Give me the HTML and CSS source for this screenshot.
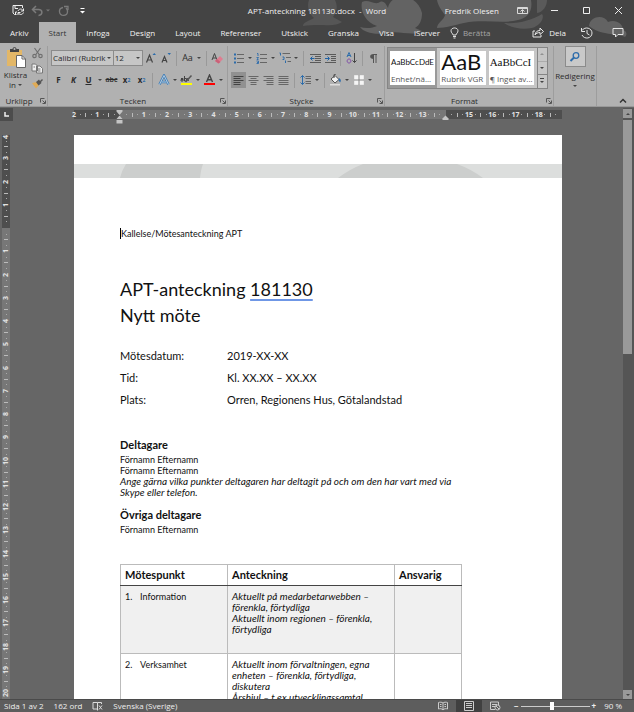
FILE: index.html
```html
<!DOCTYPE html>
<html lang="sv">
<head>
<meta charset="utf-8">
<meta name="viewport" content="width=device-width, initial-scale=1">
<title>APT-anteckning 181130.docx - Word</title>
<link rel="stylesheet" href="styles.css">
</head>
<body>
<div class="app">
<header class="header">
  <svg class="header-art" viewBox="0 0 370 43" preserveAspectRatio="xMaxYMin slice" aria-hidden="true">
    <g fill="#636363">
      <path d="M45 0H71C74 6 73 12 69 17L78 22C70 28 58 23 39 26C39 22 45 21 50 18C44 13 43 5 45 0Z" fill="#565656"/>
      <path d="M98 2C104-1 108 4 114 3C118 0 121 1 124 8C126-7 153-8 158 13C158 20 156 25 151 28L158 31C148 37 137 30 122 33C112 35 100 33 96 27C102 29 109 28 113 26C101 22 96 10 98 2Z"/>
      <path d="M173 0H267C269 11 264 18 254 20C240 24 220 19 200 23C190 25 182 28 173 28C173 23 180 20 181 15C178 11 174 6 173 0Z"/>
      <path d="M240 23C255 24 268 20 278 14C281 18 276 26 268 28C258 30 247 28 240 23Z" fill="#5a5a5a"/>
      <path d="M273 0H283C283 6 279 12 273 13Z" fill="#5a5a5a"/>
      <path d="M325 26C326 16 340 14 344 22C351 19 359 23 359 30C362 31 364 34 361 37C352 33 338 36 325 26Z"/>
    </g>
  </svg>
  <div class="titlebar">
    <div class="quick">
      <button class="q-btn q-first" aria-label="Spara"><svg width="13" height="13" viewBox="0 0 13 13" fill="none" stroke="#eee"><path d="M4.500 10.500H2.500L1 9V1.500H10.500V4M3 1.500V4.500H6M3.500 10.500V8H5"/><path d="M6 7C7 4.500 10 4.500 11 6.500M11.500 4.500V7H9M11.500 8.500C10.500 11 7.500 11 6.500 9M6 11V8.500H8.500"/></svg></button>
      <button class="q-btn" aria-label="Ångra"><svg width="20" height="12" viewBox="0 0 20 12"><path d="M5 1L1.500 4.500L5 8M2 4.500H7.500C12 4.500 12 10 7.500 10.500" fill="none" stroke="#7b7b7b" stroke-width="1.500"/><path d="M15 4.500H19L17 6.500Z" fill="#777"/></svg></button>
      <button class="q-btn" aria-label="Upprepa"><svg width="12" height="12" viewBox="0 0 12 12"><path d="M5 2.500C2.500 3 1.200 5 1.500 7C2.200 11.500 9 11.500 9.500 7C9.700 5.500 9 4 8 3M6 1.500H10V5" fill="none" stroke="#7b7b7b" stroke-width="1.300"/></svg></button>
      <button class="q-btn" aria-label="Anpassa verktygsfältet"><svg width="7" height="8" viewBox="0 0 7 8"><path d="M1.500 1.500H5.500" stroke="#fff"/><path d="M1 4H6L3.500 6.500Z" fill="#fff"/></svg></button>
    </div>
    <div class="doc-name">APT-anteckning 181130.docx &nbsp;-&nbsp; Word</div>
    <div class="account">
      <span class="user">Fredrik Olesen</span>
      <button class="win" aria-label="Visningsalternativ för menyfliksområdet"><svg width="11" height="9" viewBox="0 0 11 9" fill="none" stroke="#d8d8d8"><path d="M.5 1.500H10.500V7.500H.5ZM.5 2.500H10.500M5.500 7V4M3.500 5.500L5.500 3.500L7.500 5.500"/></svg></button>
      <button class="win" aria-label="Minimera"><svg width="9" height="9" viewBox="0 0 9 9"><path d="M1 4.500H8" stroke="#eee"/></svg></button>
      <button class="win" aria-label="Maximera"><svg width="9" height="9" viewBox="0 0 9 9"><path d="M1.500 1.500H7.500V7.500H1.500Z" fill="none" stroke="#eee"/></svg></button>
      <button class="win" aria-label="Stäng"><svg width="9" height="9" viewBox="0 0 9 9"><path d="M1 1L8 8M8 1L1 8" stroke="#eee"/></svg></button>
    </div>
  </div>
  <nav class="tabs" aria-label="Menyflikar">
    <a href="#arkiv">Arkiv</a>
    <a href="#start" class="active" aria-current="page">Start</a>
    <a href="#infoga">Infoga</a>
    <a href="#design">Design</a>
    <a href="#layout">Layout</a>
    <a href="#referenser">Referenser</a>
    <a href="#utskick">Utskick</a>
    <a href="#granska">Granska</a>
    <a href="#visa">Visa</a>
    <a href="#iserver">iServer</a>
    <button class="tell"><svg width="9" height="12" viewBox="0 0 9 12" fill="none" stroke="#e0e0e0"><path d="M3 8C3 6.500 1 6 1 3.800C1 0 8 0 8 3.800C8 6 6 6.500 6 8ZM3 9.500H6M3.500 11H5.500"/></svg><span>Berätta</span></button>
    <button class="share"><svg width="12" height="11" viewBox="0 0 12 11" fill="none" stroke="#e5e5e5"><path d="M3 4H1V10H9V8M3 8C3.500 5 5 3.500 8 3.500V1L11.500 4.500L8 7.500V5.500C5.500 5.500 4 6.500 3 8Z"/></svg><span>Dela</span></button>
    <button class="win" aria-label="Versionshistorik"><svg width="13" height="12" viewBox="0 0 13 12" fill="none" stroke="#e5e5e5"><path d="M2 3.500C5-1 12 1 12 6C12 11.500 4.500 13 2 8M1.500 1V4.500H5M7 3V6.500L9.500 8"/></svg></button>
    <button class="win" aria-label="Kommentarer"><svg width="12" height="11" viewBox="0 0 12 11"><path d="M1 1.500H11V7.500H6L3.500 10V7.500H1Z" fill="none" stroke="#e5e5e5"/></svg></button>
  </nav>
</header>

<section class="ribbon" aria-label="Start">
  <div class="group clipboard">
    <div class="clip-body">
      <button class="paste"><svg width="20" height="22" viewBox="0 0 20 22"><path d="M1 3H16V19H1Z" fill="#e3b767"/><path d="M4 5V2H6.500C6.500-.5 10.500-.5 10.500 2H13V5Z" fill="#444"/><circle cx="8.500" cy="2" r="1" fill="#bbb"/><path d="M10.500 8.500H16L19.500 12V20.500H10.500Z" fill="#fff" stroke="#666"/><path d="M16 8.500V12H19.500" fill="none" stroke="#666"/></svg><span>Klistra<br>in <i class="caret"></i></span></button>
      <div class="clip-tools">
        <button aria-label="Klipp ut"><svg width="11" height="12" viewBox="0 0 11 12" fill="none" stroke="#707070" stroke-width="1.200"><path d="M2.500 1L7.500 8M8.500 1L3.500 8"/><circle cx="2.500" cy="9" r="1.700"/><circle cx="8.500" cy="9" r="1.700"/></svg></button>
        <button aria-label="Kopiera"><svg width="12" height="11" viewBox="0 0 12 11" fill="#eee" stroke="#777"><path d="M1 1H4.500L6.500 3V8H1ZM5.500 3H9L11.500 5.500V10H5.500Z"/><path d="M2.500 4H4M7 6H9.500M7 8H9.500"/></svg></button>
        <button aria-label="Hämta format"><svg width="12" height="11" viewBox="0 0 12 11"><path d="M1 5L6 4L8 7L5 10.500Z" fill="#e0ab56"/><path d="M5 4L8 1.500L9 3L11 1L12 2L10 4L10.500 5L7.500 7.500Z" fill="#555"/></svg></button>
      </div>
    </div>
    <div class="label"><span>Urklipp</span><button class="launch" aria-label="Fler alternativ för urklipp"><svg width="6" height="6" viewBox="0 0 6 6"><path d="M.5 4.500V.5H4.500M2.500 2.500L5 5M5.500 2.500V5.500H2.500" fill="none" stroke="#555"/></svg></button></div>
  </div>

  <div class="group font">
    <div class="rows">
      <div class="row">
        <span class="combo family"><select aria-label="Teckensnitt"><option>Calibri (Rubrik</option></select><i class="caret"></i></span>
        <span class="combo size"><select aria-label="Teckenstorlek"><option>12</option></select><i class="caret"></i></span>
        <button class="t" aria-label="Öka teckenstorlek"><svg width="12" height="12" viewBox="0 0 12 12"><path d="M1.500 10.500L4.500 3L7.500 10.500M2.500 8H6.500" fill="none" stroke="#444" stroke-width="1.200"/><path d="M7.500 3H11L9.300 1Z" fill="#2c6cab"/></svg></button>
        <button class="t" aria-label="Minska teckenstorlek"><svg width="12" height="12" viewBox="0 0 12 12"><path d="M2 10.500L4.500 4.500L7 10.500M3 8.500H6" fill="none" stroke="#444" stroke-width="1.200"/><path d="M7.500 1H11L9.300 3Z" fill="#2c6cab"/></svg></button>
        <i class="sep"></i>
        <button class="t case" aria-label="Ändra skiftläge">Aa</button><button class="c" aria-label="Skiftlägesalternativ"><i class="caret"></i></button>
        <i class="sep"></i>
        <button class="t" aria-label="Rensa formatering"><svg width="13" height="13" viewBox="0 0 13 13"><path d="M1 8L3.500 1.500L6 8M2 6H5" fill="none" stroke="#444"/><path d="M4 9L9 4L12 7L7.500 11.500Z" fill="#e07c90"/><path d="M4 9L6 7L9.500 10L7.500 11.500Z" fill="#c96178"/></svg></button>
      </div>
      <div class="row">
        <button class="t bold" aria-label="Fet">F</button>
        <button class="t bold ital" aria-label="Kursiv">K</button>
        <button class="t bold under" aria-label="Understruken">U</button><button class="c" aria-label="Understrykningsalternativ"><i class="caret"></i></button>
        <button class="t small strike" aria-label="Genomstruken">abc</button>
        <button class="t bold" aria-label="Nedsänkt">x<sub>2</sub></button>
        <button class="t bold" aria-label="Upphöjd">x<sup>2</sup></button>
        <i class="sep"></i>
        <button class="t" aria-label="Texteffekter"><svg width="12" height="12" viewBox="0 0 12 12"><path d="M1.500 10.500L6 1.500L10.500 10.500M3.500 8H8.500" fill="none" stroke="#4581b8" stroke-width="2.500"/><path d="M1.500 10.500L6 1.500L10.500 10.500M3.500 8H8.500" fill="none" stroke="#c8d8e6" stroke-width=".8"/></svg></button><button class="c" aria-label="Texteffektsalternativ"><i class="caret"></i></button>
        <button class="t" aria-label="Överstrykning"><svg width="13" height="12" viewBox="0 0 13 12"><path d="M1 4.500H3V7H1V5.500H3M4.500 2V7H6.500V4.500H4.500M7.500 4L8.500 7" fill="none" stroke="#444"/><path d="M5.500 8L11.500 1.500" stroke="#555" stroke-width="1.500"/><path d="M1 9H12V11H1Z" fill="#ff0"/></svg></button><button class="c" aria-label="Överstrykningsfärg"><i class="caret"></i></button>
        <button class="t" aria-label="Teckenfärg"><svg width="13" height="12" viewBox="0 0 13 12"><path d="M3.500 8L6.500 1L9.500 8M4.500 5.800H8.500" fill="none" stroke="#444" stroke-width="1.400"/><path d="M1 9H12V11H1Z" fill="#f00"/></svg></button><button class="c" aria-label="Teckenfärgsalternativ"><i class="caret"></i></button>
      </div>
    </div>
    <div class="label"><span>Tecken</span><button class="launch" aria-label="Fler teckenalternativ"><svg width="6" height="6" viewBox="0 0 6 6"><path d="M.5 4.500V.5H4.500M2.500 2.500L5 5M5.500 2.500V5.500H2.500" fill="none" stroke="#555"/></svg></button></div>
  </div>

  <div class="group para">
    <div class="rows">
      <div class="row">
        <button class="t" aria-label="Punktlista"><svg width="11" height="11" viewBox="0 0 11 11"><path d="M1 1.500H3M1 5.500H3M1 9.500H3" stroke="#2c6cab" stroke-width="2"/><path d="M4 1.500H11M4 5.500H11M4 9.500H11" stroke="#666"/></svg></button><button class="c" aria-label="Punkttecken"><i class="caret"></i></button>
        <button class="t" aria-label="Numrerad lista"><svg width="11" height="11" viewBox="0 0 11 11"><path d="M1 .5H2V3M.5 4.500H2.500L1 6.500H2.500M.5 8H2.500V10.500H.5M1 9.500H2.500" fill="none" stroke="#2c6cab" stroke-width=".9"/><path d="M4 1.500H11M4 5.500H11M4 9.500H11" stroke="#666"/></svg></button><button class="c" aria-label="Numrering"><i class="caret"></i></button>
        <button class="t" aria-label="Flernivålista"><svg width="12" height="12" viewBox="0 0 12 12"><path d="M.5 1H1.500V3.500M3.500 5H5V7.500H3.500M6.500 8.500V11" fill="none" stroke="#2c6cab"/><path d="M3.500 1.500H11M7 5.500H12M8.500 9.500H12" stroke="#666"/></svg></button><button class="c" aria-label="Flernivåalternativ"><i class="caret"></i></button>
        <i class="sep"></i>
        <button class="t" aria-label="Minska indrag"><svg width="12" height="11" viewBox="0 0 12 11"><path d="M1 1.500H12M6 3.500H12M6 5.500H12M6 7.500H12M1 9.500H12" stroke="#5a5a5a"/><path d="M5.500 5.500H1.500M3.500 3.500L1.500 5.500L3.500 7.500" fill="none" stroke="#1f62a5"/></svg></button>
        <button class="t" aria-label="Öka indrag"><svg width="12" height="11" viewBox="0 0 12 11"><path d="M1 1.500H12M7 3.500H12M7 5.500H12M7 7.500H12M1 9.500H12" stroke="#5a5a5a"/><path d="M1 5.500H5M3.500 3.500L5.500 5.500L3.500 7.500" fill="none" stroke="#1f62a5"/></svg></button>
        <i class="sep"></i>
        <button class="t" aria-label="Sortera"><svg width="11" height="12" viewBox="0 0 11 12" fill="none"><path d="M1 5L3 .5L5 5M1.500 3.500H4.500" stroke="#2c6cab"/><path d="M3 7C.5 7 .5 11 3 11C5.500 11 5.500 7 3 7Z" stroke="#804fa8"/><path d="M8.500 1V10.500M6.500 8.500L8.500 10.500L10.500 8.500" stroke="#444"/></svg></button>
        <i class="sep"></i>
        <button class="t" aria-label="Visa alla tecken"><svg width="9" height="11" viewBox="0 0 9 11"><path d="M4.500 1.500H8M4.500 1V10M7 1V10" stroke="#555"/><path d="M4.500 1C0 1 0 6 4.500 6Z" fill="#555"/></svg></button>
      </div>
      <div class="row">
        <button class="t on" aria-label="Vänsterjustera" aria-pressed="true"><svg width="11" height="11" viewBox="0 0 11 11"><path d="M.5 1.500H10.500M.5 3.500H7.500M.5 5.500H10.500M.5 7.500H7.500M.5 9.500H7.500" stroke="#444"/></svg></button>
        <button class="t" aria-label="Centrera"><svg width="11" height="11" viewBox="0 0 11 11"><path d="M.5 1.500H10.500M2.500 3.500H8.500M.5 5.500H10.500M2.500 7.500H8.500M2.500 9.500H8.500" stroke="#666"/></svg></button>
        <button class="t" aria-label="Högerjustera"><svg width="11" height="11" viewBox="0 0 11 11"><path d="M.5 1.500H10.500M3.500 3.500H10.500M.5 5.500H10.500M3.500 7.500H10.500M3.500 9.500H10.500" stroke="#666"/></svg></button>
        <button class="t" aria-label="Marginaljustera"><svg width="11" height="11" viewBox="0 0 11 11"><path d="M.5 1.500H10.500M.5 3.500H10.500M.5 5.500H10.500M.5 7.500H10.500M.5 9.500H10.500" stroke="#666"/></svg></button>
        <i class="sep"></i>
        <button class="t" aria-label="Radavstånd"><svg width="11" height="12" viewBox="0 0 11 12"><path d="M2.500 1.500V10.500M.5 3.500L2.500 1.500L4.500 3.500M.5 8.500L2.500 10.500L4.500 8.500" fill="none" stroke="#2c6cab"/><path d="M5.500 2.500H11M5.500 4.500H11M5.500 7.500H11M5.500 9.500H11" stroke="#666"/></svg></button><button class="c" aria-label="Radavståndsalternativ"><i class="caret"></i></button>
        <i class="sep"></i>
        <button class="t" aria-label="Fyllning"><svg width="13" height="12" viewBox="0 0 13 12"><path d="M2 5L6 1.500L10 5.500L6 9Z" fill="#f2f2f2" stroke="#555"/><path d="M5 4V1C5 0 6.500 0 6.500 1" fill="none" stroke="#444"/><path d="M10 4C12 5 12.500 7 11 8.500L9.500 6Z" fill="#2c6cab"/><path d="M1 10H11V11.500H1Z" fill="#ddd"/></svg></button><button class="c" aria-label="Fyllningsfärg"><i class="caret"></i></button>
        <button class="t" aria-label="Kantlinjer"><svg width="10" height="10" viewBox="0 0 10 10"><path d="M.5 .5H9.500V9.500H.5Z" fill="#f5f5f5" stroke="#e8e8e8"/><path d="M5 0V10M0 5H10" stroke="#888"/></svg></button><button class="c" aria-label="Kantlinjealternativ"><i class="caret"></i></button>
      </div>
    </div>
    <div class="label"><span>Stycke</span><button class="launch" aria-label="Fler styckealternativ"><svg width="6" height="6" viewBox="0 0 6 6"><path d="M.5 4.500V.5H4.500M2.500 2.500L5 5M5.500 2.500V5.500H2.500" fill="none" stroke="#555"/></svg></button></div>
  </div>

  <div class="group styles">
    <div class="gallery">
      <button class="card current"><span class="sample">AaBbCcDdE</span><span class="style-name">Enhet/nä...</span></button>
      <button class="card"><span class="sample big">AaB</span><span class="style-name">Rubrik VGR</span></button>
      <button class="card"><span class="sample serif">AaBbCcI</span><span class="style-name">¶ Inget av...</span></button>
      <div class="spin">
        <button disabled aria-label="Föregående rad"><i class="caret up"></i></button>
        <button aria-label="Nästa rad"><i class="caret"></i></button>
        <button aria-label="Fler format"><i class="caret lined"></i></button>
      </div>
    </div>
    <div class="label"><span>Format</span><button class="launch" aria-label="Fler formatalternativ"><svg width="6" height="6" viewBox="0 0 6 6"><path d="M.5 4.500V.5H4.500M2.500 2.500L5 5M5.500 2.500V5.500H2.500" fill="none" stroke="#555"/></svg></button></div>
  </div>

  <div class="group edit">
    <button class="edit-btn"><span class="edit-icon"><svg width="12" height="12" viewBox="0 0 12 12" fill="none" stroke="#2c6cab"><circle cx="7" cy="4.500" r="2.800" stroke-width="1.300"/><path d="M5 6.500L1.500 10" stroke-width="2"/></svg></span><span>Redigering</span><i class="caret"></i></button>
  </div>
  <button class="collapse" aria-label="Dölj menyfliksområdet"><svg width="8" height="6" viewBox="0 0 8 6"><path d="M1 4.500L4 1.500L7 4.500" fill="none" stroke="#333" stroke-width="1.500"/></svg></button>
</section>

<main class="workspace">
  <div class="corner"><button class="tabstop" aria-label="Tabbstopp"><svg width="5" height="5" viewBox="0 0 5 5"><path d="M1 0V4H5" fill="none" stroke="#eee" stroke-width="1.500"/></svg></button></div>
  <div class="hruler">
    <div class="hscale">
      <span class="m"><b>2</b></span><span class="m"><b>1</b></span><span><svg class="marker" width="7" height="14" viewBox="0 0 7 14"><path d="M.5 0H6.500V1.500L3.500 5L.5 1.500ZM3.500 5.500L6.500 9H.5ZM.5 10H6.500V13.500H.5Z" fill="#c4c4c4"/></svg></span><span><b>1</b></span><span><b>2</b></span><span><b>3</b></span><span><b>4</b></span><span><b>5</b></span><span><b>6</b></span><span><b>7</b></span><span><b>8</b></span><span><b>9</b></span><span><b>10</b></span><span><b>11</b></span><span><b>12</b></span><span><b>13</b></span><span class="m"><svg class="marker" width="7" height="14" viewBox="0 0 7 14"><path d="M3.500 5.500L6.500 8.500V10H.5V8.500Z" fill="#c4c4c4"/></svg></span><span class="m"><b>15</b></span><span class="m"><b>16</b></span><span class="m"><b>17</b></span><span class="m"><b>18</b></span>
    </div>
  </div>
  <div class="vruler">
    <div class="vscale">
      <span class="m"><b>4</b></span><span class="m"><b>3</b></span><span class="m"><b>2</b></span><span class="m"><b>1</b></span><span></span><span><b>1</b></span><span><b>2</b></span><span><b>3</b></span><span><b>4</b></span><span><b>5</b></span><span><b>6</b></span><span><b>7</b></span><span><b>8</b></span><span><b>9</b></span><span><b>10</b></span><span><b>11</b></span><span><b>12</b></span><span><b>13</b></span><span><b>14</b></span><span><b>15</b></span><span><b>16</b></span><span><b>17</b></span><span><b>18</b></span><span><b>19</b></span><span class="last"><b>20</b></span>
    </div>
  </div>
  <div class="canvas">
    <article class="page">
      <svg class="band" viewBox="0 0 488 14" preserveAspectRatio="none" aria-hidden="true"><path d="M0 0H488V14H0Z" fill="#dcdedd"/><path d="M52 0H129Q127 5 126 14H46Q48 6 52 0ZM264 14Q276 5 289 0H383Q397 5 409 14Z" fill="#cccecd"/></svg>
      <div class="content">
        <p class="kicker">Kallelse/Mötesanteckning APT</p>
        <h1>APT-anteckning <u>181130</u><br>Nytt möte</h1>
        <dl>
          <dt>Mötesdatum:</dt><dd>2019-XX-XX</dd>
          <dt>Tid:</dt><dd>Kl. XX.XX – XX.XX</dd>
          <dt>Plats:</dt><dd>Orren, Regionens Hus, Götalandstad</dd>
        </dl>
        <h2>Deltagare</h2>
        <p>Förnamn Efternamn<br>Förnamn Efternamn<br><em>Ange gärna vilka punkter deltagaren har deltagit på och om den har vart med via Skype eller telefon.</em></p>
        <h2 class="next">Övriga deltagare</h2>
        <p>Förnamn Efternamn</p>
        <table>
          <thead><tr><th scope="col">Mötespunkt</th><th scope="col">Anteckning</th><th scope="col">Ansvarig</th></tr></thead>
          <tbody>
            <tr class="shade"><td><span class="no">1.</span>Information</td><td><em>Aktuellt på medarbetarwebben –<br>förenkla, förtydliga<br>Aktuellt inom regionen – förenkla,<br>förtydliga</em></td><td></td></tr>
            <tr><td><span class="no">2.</span>Verksamhet</td><td><em>Aktuellt inom förvaltningen, egna<br>enheten – förenkla, förtydliga,<br>diskutera<br>Årshjul – t ex utvecklingssamtal</em></td><td></td></tr>
          </tbody>
        </table>
      </div>
    </article>
  </div>
  <div class="scroll">
    <button aria-label="Rulla uppåt"><i class="caret up"></i></button>
    <div class="track"><div class="thumb"></div></div>
    <button aria-label="Rulla nedåt"><i class="caret"></i></button>
  </div>
</main>

<footer class="status">
  <div class="info">
    <span>Sida 1 av 2</span>
    <span>162 ord</span>
    <button aria-label="Språkkontroll"><svg width="11" height="10" viewBox="0 0 11 10" fill="none" stroke="#ddd"><path d="M5.500 1.500H1V8H5.500V1.500M5.500 1.500H9.500V3M5.500 8V9.500M7 4.500L10 8.500M10 4.500L7 8.500"/></svg></button>
    <span>Svenska (Sverige)</span>
  </div>
  <div class="views">
    <button aria-label="Läsläge"><svg width="10" height="10" viewBox="0 0 10 10" fill="none" stroke="#ccc"><path d="M5 2C4 1 2 1 .5 1.500V8C2 7.500 4 7.500 5 9C6 7.500 8 7.500 9.500 8V1.500C8 1 6 1 5 2V9M2 3.500H3.500M2 5.500H3.500M6.500 3.500H8M6.500 5.500H8"/></svg></button>
    <button class="on" aria-label="Utskriftslayout" aria-pressed="true"><svg width="10" height="10" viewBox="0 0 10 10" fill="none" stroke="#ccc"><path d="M.5 .5H9.500V9.500H.5ZM2 2.500H8M2 4.500H8M2 6.500H8"/></svg></button>
    <button aria-label="Webblayout"><svg width="11" height="10" viewBox="0 0 11 10" fill="none" stroke="#ccc"><path d="M5 8.500H.5V1H8.500V4M2 3.500H7M2 5.500H5"/><circle cx="7.500" cy="6.500" r="2.500"/><path d="M6 5L9 8"/></svg></button>
  </div>
  <div class="zoom"><button aria-label="Zooma ut">−</button><input type="range" min="0" max="100" value="45" aria-label="Zoom"><button aria-label="Zooma in">+</button><span>90 %</span></div>
</footer>
</div>
</body>
</html>
```
FILE: styles.css
```css
* { box-sizing: border-box; }

body {
  margin: 0;
  font: 8px/10px "Open Sans", "Noto Sans", sans-serif;
  color: #2b2b2b;
  background: #666;
}

button {
  display: flex;
  align-items: center;
  justify-content: center;
  padding: 0;
  border: 0;
  background: none;
  font: inherit;
  color: inherit;
}

svg { display: block; flex: none; }

.app { display: flex; flex-direction: column; height: 100vh; overflow: hidden; }

.caret {
  display: inline-block;
  width: 0;
  height: 0;
  border: 2px solid transparent;
  border-top-color: #444;
  border-bottom: 0;
}
.caret.up { border-top: 0; border-bottom: 2px solid #444; }

/* Title bar and tabs */
.header { position: relative; flex: none; background: #444; color: #f2f2f2; }
.header-art { position: absolute; top: 0; right: 0; width: 370px; height: 100%; }
.titlebar, .tabs { position: relative; display: flex; align-items: center; }
.titlebar { height: 21px; }
.quick { display: flex; flex: 1; align-items: center; gap: 6px; }
.q-btn { min-width: 13px; }
.q-first { margin-left: 12px; }
.doc-name { white-space: nowrap; }
.account { display: flex; flex: 1; justify-content: flex-end; align-items: center; }
.user { margin-right: 7px; white-space: nowrap; }
.win { width: 32px; height: 20px; }

.tabs { height: 22px; padding-top: 1px; }
.tabs a {
  padding: 0 10px;
  color: inherit;
  line-height: 21px;
  text-decoration: none;
}
.tabs a.active { background: #b1b1b1; color: #333; }
.tell { gap: 4px; margin-left: 0; color: #a5a5a5; }
.share { gap: 5px; margin: 0 4px 0 auto; }

/* Ribbon */
.ribbon { display: flex; flex: none; height: 64px; padding-top: 3px; background: #b1b1b1; border-bottom: 1px solid #999; }
.group { display: flex; flex-direction: column; flex: none; border-right: 1px solid #9d9d9d; }
.label { display: flex; align-items: center; justify-content: center; margin-top: auto; }
.label span { flex: 1; text-align: center; }
.launch { width: 9px; height: 9px; }

.clipboard { width: 48px; }
.clip-body { display: flex; align-items: flex-start; padding: 1px 0 0 2px; }
.paste { flex-direction: column; width: 27px; text-align: center; white-space: nowrap; }
.paste span { margin-top: 1px; }
.paste .caret { vertical-align: 2px; }
.clip-tools { display: flex; flex-direction: column; gap: 4px; margin-left: 2px; }

.font { width: 180px; }
.para { width: 157px; }
.rows { display: flex; flex-direction: column; gap: 6px; padding: 4px 2px 0 3px; }
.row { display: flex; align-items: center; height: 16px; }
.t { flex: none; width: 15px; height: 16px; }
.t.on { background: #919191; }
.c { flex: none; width: 8px; height: 16px; }
.sep { flex: none; width: 1px; height: 15px; margin: 0 3px; background: #999; }
.bold { font-weight: 700; }
.ital { font-style: italic; }
.under { text-decoration: underline; }
.strike { text-decoration: line-through; font-weight: 600; }
.small { font-size: 7px; }
.case { font-size: 9px; }
sub, sup { font-size: 5px; line-height: 0; color: #2c6cab; }

.combo { position: relative; display: flex; align-items: center; height: 16px; border: 1px solid #8b8b8b; background: #c6c6c6; }
.combo select {
  width: 100%;
  height: 14px;
  padding: 0 0 0 1px;
  border: 0;
  background: none;
  font: inherit;
  color: inherit;
  appearance: none;
}
.combo .caret { position: absolute; right: 2px; pointer-events: none; }
.family { width: 64px; }
.size { width: 30px; border-left: 0; }

.styles { width: 169px; }
.gallery { display: flex; gap: 3px; height: 42px; margin: 1px 5px 0 2px; border: 1px solid #858585; background: #c6c6c6; }
.card {
  flex: 1;
  flex-direction: column;
  align-items: flex-start;
  justify-content: space-between;
  min-width: 0;
  margin: 3px 0;
  padding: 0 1px 1px;
  background: #fff;
}
.card.current { margin: 0; border: 3px solid #999; border-width: 3px 2px; }
.sample { width: 100%; height: 22px; font: 8px/22px Lato, sans-serif; color: #111; text-align: left; white-space: nowrap; }
.sample.big { font-size: 22px; }
.sample.serif { font: 11px/22px "Liberation Serif", serif; }
.style-name { color: #555; white-space: nowrap; }
.spin { display: flex; flex-direction: column; width: 10px; border-left: 1px solid #858585; }
.spin button { flex: 1; border-bottom: 1px solid #858585; }
.spin button:last-child { border: 0; }
.spin :disabled { opacity: .4; }
.lined { position: relative; }
.lined::before { content: ""; position: absolute; left: -2px; top: -5px; width: 4px; height: 1px; background: #444; }

.edit { width: 43px; padding: 0 1px; }
.edit-btn { flex-direction: column; gap: 4px; }
.edit-icon { display: flex; align-items: center; justify-content: center; width: 21px; height: 21px; border: 1px solid #8b8b8b; background: #c9c9c9; }
.collapse { width: 12px; height: 10px; margin: auto 5px 0 auto; }

/* Work area */
.workspace {
  display: grid;
  grid-template: 27px minmax(0, 1fr) / 13px minmax(0, 1fr) 11px;
  flex: 1;
  min-height: 0;
  padding-top: 1px;
  background: #666;
}
.corner { display: flex; }
.tabstop { width: 13px; height: 13px; background: #4c4c4c; }
.hruler { padding: 2px 0 0; overflow: hidden; }
.hscale { display: flex; width: 80%; margin: 0 auto; color: #e2e2e2; }
.hscale span {
  position: relative;
  flex: 1;
  height: 9px;
  background:
    linear-gradient(#aaa, #aaa) 25% 50% / 1px 1px no-repeat,
    linear-gradient(#bbb, #bbb) 50% 50% / 1px 4px no-repeat,
    linear-gradient(#aaa, #aaa) 75% 50% / 1px 1px no-repeat,
    #777;
}
.hscale .m, .vscale .m { background-color: #4e4e4e; }
.hscale b, .vscale b { position: absolute; font-size: 7px; line-height: 9px; }
.hscale b { left: 0; transform: translateX(-50%); }
.marker { position: absolute; left: -4px; top: 0; z-index: 1; }

.vruler { padding: 0 3px 0 2px; overflow: hidden; }
.vscale { display: flex; flex-direction: column; width: 8px; height: 100%; color: #e2e2e2; }
.vscale span {
  position: relative;
  flex: 4;
  background:
    linear-gradient(#aaa, #aaa) 50% 25% / 1px 1px no-repeat,
    linear-gradient(#bbb, #bbb) 50% 50% / 4px 1px no-repeat,
    linear-gradient(#aaa, #aaa) 50% 75% / 1px 1px no-repeat,
    #777;
}
.vscale .last { flex: 1; background: #777; }
.vscale b { top: 0; left: 0; width: 8px; line-height: 8px; writing-mode: vertical-rl; transform: translateY(-50%) rotate(180deg); }
.vscale span:first-child b { transform: rotate(180deg); }

.canvas { overflow: hidden; }
.page {
  width: 80%;
  min-height: 100%;
  margin: 0 auto;
  padding-top: 29px;
  background: #fff;
  color: #111;
  font: 9px/11px Lato, Carlito, sans-serif;
}
.band { width: 100%; height: 14px; }
.content { width: 388px; max-width: 100%; padding: 50px 0 0 46px; }
.content p { margin: 0; }
.content .kicker { border-left: 1px solid #000; }
h1 { margin: 37px 0 0; font-size: 18px; line-height: 26px; font-weight: 400; }
h1 u { text-decoration: underline solid #6f97e6 2px; text-underline-offset: 3px; text-decoration-skip-ink: none; }
dl { display: grid; grid-template-columns: 107px 1fr; gap: 10px 0; margin: 22px 0 33px; font-size: 11px; line-height: 12px; }
dd { margin: 0; }
h2 { margin: 0 0 3px; font-size: 11px; line-height: 12px; font-weight: 700; }
h2.next { margin-top: 11px; }
em { font-size: 10px; }
table { width: 342px; margin-top: 29px; border-collapse: collapse; table-layout: fixed; }
th, td { padding: 5px 0 5px 4px; border: 1px solid #bbb; text-align: left; vertical-align: top; }
th { padding: 4px 0 4px 4px; border-bottom-color: #444; font-size: 11px; line-height: 12px; }
th:first-child { width: 107px; }
th:last-child { width: 67px; }
td { height: 68px; }
.shade { background: #f0f0f0; }
.no { display: inline-block; width: 15px; }

.scroll { display: flex; flex-direction: column; grid-row: 1 / 3; grid-column: 3; padding-top: 1px; background: #555; }
.scroll button { width: 9px; height: 9px; background: #999; }
.track { flex: 1; padding-top: 2px; }
.thumb { width: 9px; height: 41%; background: #999; }

/* Status bar */
.status { display: flex; align-items: center; flex: none; height: 13px; padding: 0 12px 0 4px; background: #5d5d5d; border-top: 1px solid #4a4a4a; color: #eee; gap: 6px; white-space: nowrap; }
.info { display: flex; align-items: center; gap: 10px; }
.views { display: flex; margin-left: auto; }
.views button { width: 26px; height: 12px; }
.views .on { background: #404040; }
.zoom { display: flex; align-items: center; gap: 2px; }
.zoom button { font-weight: 700; }
.zoom span { margin-left: 6px; }
.zoom input { width: 69px; height: 10px; margin: 0; appearance: none; background: linear-gradient(#ccc, #ccc) 0 50% / 100% 1px no-repeat; }
.zoom input::-webkit-slider-thumb { appearance: none; width: 4px; height: 8px; background: #fff; }
```
